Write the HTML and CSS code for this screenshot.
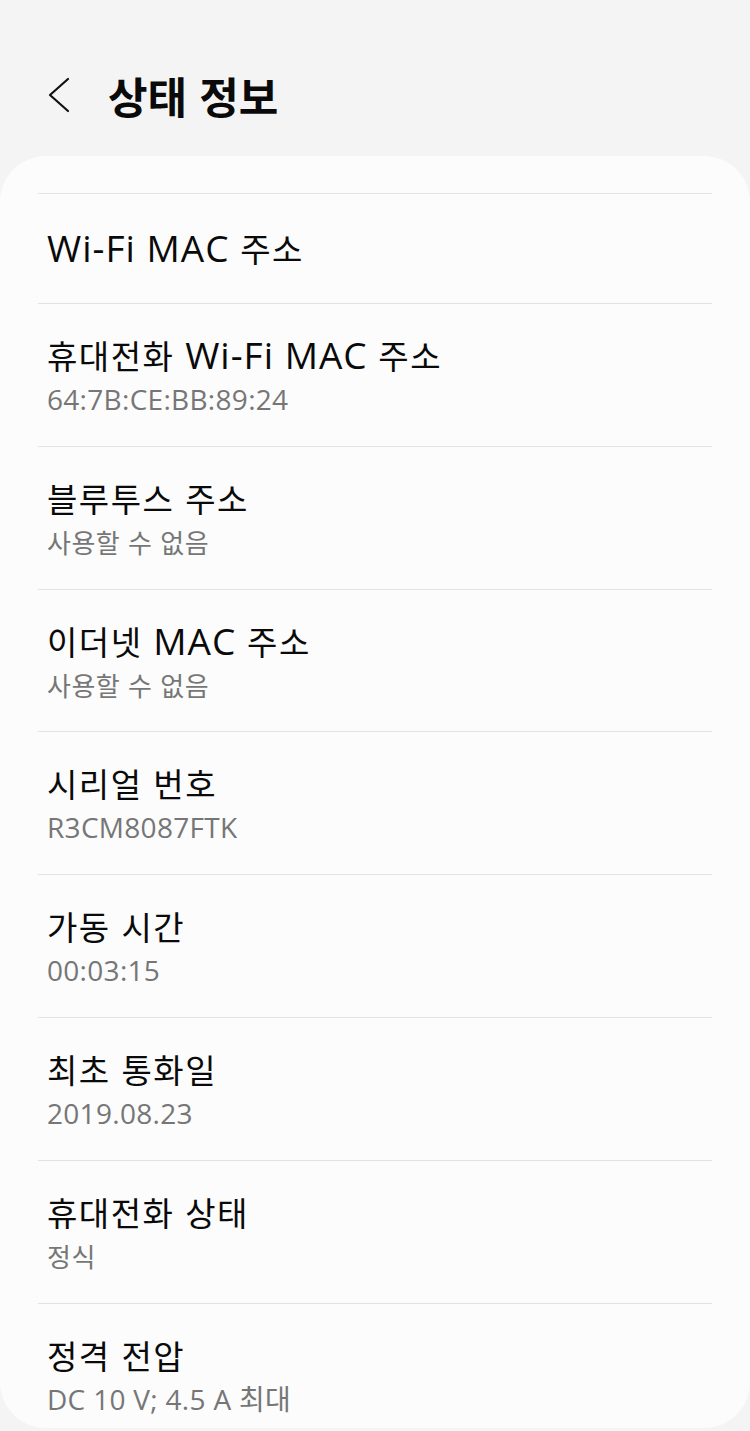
FILE: index.html
```html
<!DOCTYPE html>
<html lang="ko">
  <head>
    <meta charset="UTF-8" />
    <meta name="viewport" content="width=device-width, initial-scale=1.0" />
    <title>상태 정보</title>
    <link rel="stylesheet" href="styles.css">
  </head>
  <body>
    <header class="top-bar">
      <button class="back-button" aria-label="뒤로">
        <svg width="28" height="36" viewBox="0 0 28 36">
          <path d="M24 2 L6 18 L24 34" fill="none" stroke="#111" stroke-width="2.2" stroke-linecap="round" stroke-linejoin="round" />
        </svg>
      </button>
      <h1 class="page-title">상태 정보</h1>
    </header>

    <main class="card">
      <ul class="info-list">
        <li class="info-row single">
          <div class="info-title"><span class="en">Wi-Fi MAC</span> 주소</div>
        </li>
        <li class="info-row">
          <div class="info-title">휴대전화 <span class="en">Wi-Fi MAC</span> 주소</div>
          <div class="info-value">64:7B:CE:BB:89:24</div>
        </li>
        <li class="info-row">
          <div class="info-title">블루투스 주소</div>
          <div class="info-value ko">사용할 수 없음</div>
        </li>
        <li class="info-row">
          <div class="info-title">이더넷 <span class="en">MAC</span> 주소</div>
          <div class="info-value ko">사용할 수 없음</div>
        </li>
        <li class="info-row">
          <div class="info-title">시리얼 번호</div>
          <div class="info-value">R3CM8087FTK</div>
        </li>
        <li class="info-row">
          <div class="info-title">가동 시간</div>
          <div class="info-value">00:03:15</div>
        </li>
        <li class="info-row">
          <div class="info-title">최초 통화일</div>
          <div class="info-value">2019.08.23</div>
        </li>
        <li class="info-row">
          <div class="info-title">휴대전화 상태</div>
          <div class="info-value ko">정식</div>
        </li>
        <li class="info-row">
          <div class="info-title">정격 전압</div>
          <div class="info-value">DC 10 V; 4.5 A 최대</div>
        </li>
      </ul>
    </main>
  </body>
</html>
```

FILE: styles.css
```css
body {
  font-family: "Noto Sans CJK KR", "Noto Sans", sans-serif;
  margin: 0;
  background-color: #f4f4f4;
  color: #0a0a0a;
  height: 1431px;
  overflow: hidden;
}
.top-bar {
  display: flex;
  align-items: center;
  box-sizing: border-box;
  height: 156px;
  padding: 34px 0 0 44px;
}
.back-button {
  background: none;
  border: none;
  padding: 0;
  display: flex;
  cursor: pointer;
}
.page-title {
  margin: 0 0 0 36px;
  font-size: 43px;
  font-weight: 700;
}
.card {
  background-color: #fcfcfc;
  border-radius: 46px;
  height: 1272px;
  box-sizing: border-box;
  padding: 37px 38px 0;
  overflow: hidden;
}
.info-list {
  list-style: none;
  margin: 0;
  padding: 0;
}
.info-row {
  border-top: 1px solid #e3e3e3;
  box-sizing: border-box;
  height: 142.8px;
  padding: 29px 0 0 9px;
}
.info-row.single {
  height: 110px;
  padding-top: 32px;
}
.info-title {
  font-size: 33px;
  line-height: 44px;
  letter-spacing: 1.5px;
}
.info-title .en {
  font-family: "Open Sans", sans-serif;
  font-size: 37px;
  line-height: 1;
  letter-spacing: 1px;
}
.info-value {
  font-family: "Open Sans", "Noto Sans CJK KR", sans-serif;
  font-size: 28px;
  line-height: 44px;
  letter-spacing: 0.3px;
  color: #767676;
}
.info-value.ko {
  font-family: "Noto Sans CJK KR", sans-serif;
  font-size: 26px;
  letter-spacing: 0.5px;
}
```
